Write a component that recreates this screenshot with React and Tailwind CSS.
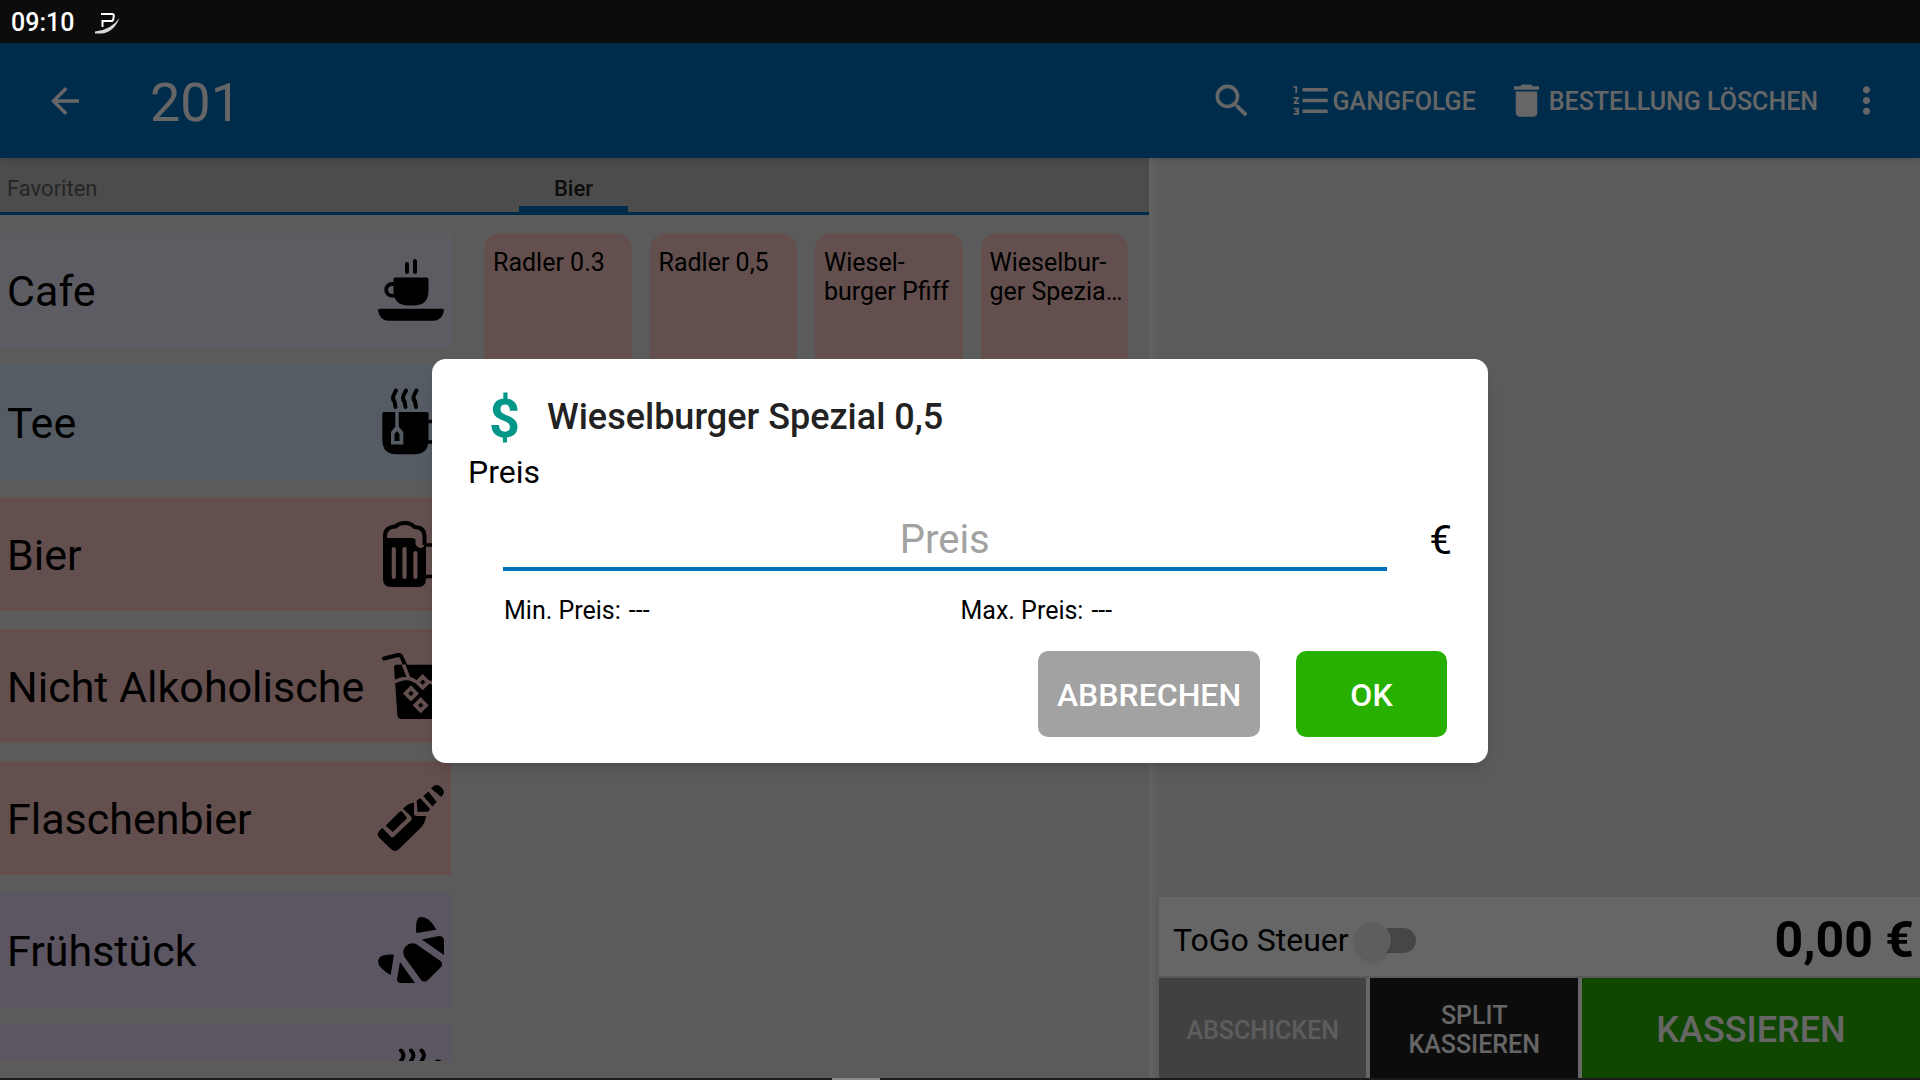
import { useState } from "react";
import {
  MdArrowBack,
  MdDelete,
  MdFormatListNumbered,
  MdMoreVert,
  MdSearch,
} from "react-icons/md";

const Icon = ({ children }) => (
  <svg viewBox="0 0 66 66" className="h-[66px] w-[66px] shrink-0 overflow-visible" aria-hidden="true">
    {children}
  </svg>
);

const CoffeeIcon = () => (
  <Icon>
    <path d="M29 7v8M37 4v11" fill="none" stroke="black" strokeWidth="4" strokeLinecap="round" />
    <path d="M17 20.5h31.500q2 0 2 2v11q0 15-15 15h-5q-15 0-15-15v-11q0-2 1.500-2z" />
    <path d="M17 27h-3a5.800 5.800 0 0 0 0 11.600h3" fill="none" stroke="black" strokeWidth="3.800" />
    <path d="M2 51.700h62q2 0 2 2-2 10-11 10H11q-9 0-11-10 0-2 2-2z" />
  </Icon>
);

const TeaIcon = ({ cut }) => (
  <Icon>
    <path
      d="M18 1.500l-1.500 3q-3 4.500 0 8l1 5.500M28 1.500l-1.500 3q-3 4.500 0 8l1 5.500M38.500 1.500l-1.500 3q-3 4.500 0 8l1 5.500"
      fill="none"
      stroke="black"
      strokeWidth="4"
      strokeLinecap="round"
    />
    <path d="M6 23h43q1.500 0 1.500 1.500V51q0 14.300-14.500 14.300H19Q4.300 65.300 4.300 51V24.500Q4.300 23 6 23z" />
    <path d="M50 32.500h8q4 0 4 4v11q0 5.500-6 5.500h-7" fill="none" stroke="black" strokeWidth="3.500" />
    <path d="M19 23v15" stroke={cut} strokeWidth="3.500" />
    <path d="M17 38h4l4.300 5v12.500H13V43z" fill={cut} />
    <path d="M19 42l2.500 3v7h-5v-7z" />
  </Icon>
);

const BeerIcon = ({ cut }) => (
  <Icon>
    <path d="M5 14h43v44q0 8-8 8H13q-8 0-8-8z" />
    <path
      d="M7 18v-4q1-8 10-8 2-4 10-4t10 4q9 0 9.500 9v9q-1 3-4 3-5-1-5-5v-3q0-1.500-1.500-1.500z"
      fill={cut}
    />
    <path
      d="M7 22v-7q0-9 10.500-9.500 3.500-3.500 9.500-3.500t9.500 4Q46 6 46.500 15v9"
      fill="none"
      stroke="black"
      strokeWidth="4"
    />
    <path d="M7 17h28.500v5H7z" />
    <path d="M15.800 28v28M26.500 28v28M37.400 32v24" stroke={cut} strokeWidth="4.200" strokeLinecap="round" />
    <path d="M48 24h9q5 0 5 5v21q0 5.500-6 5.500h-8" fill="none" stroke="black" strokeWidth="3.500" />
  </Icon>
);

const SodaIcon = ({ cut }) => (
  <Icon>
    <path d="M6 5.500l14-3.500q2.500-.5 3.500 2l4 9" fill="none" stroke="black" strokeWidth="4" strokeLinecap="round" strokeLinejoin="round" />
    <path d="M17.500 11.700H64l-3.500 50q-.5 4.300-4.500 4.300H24q-4.500 0-4.700-4.300L16 13z" />
    <path d="M25.500 11.700l5.500 14M15 29.500q8-4.500 15-4 5 .5 8 3.500M51 29q6 2 13 0" fill="none" stroke={cut} strokeWidth="3.500" />
    <g fill="black" stroke={cut} strokeWidth="3.800">
      <path d="M44.700 23.800l5.400 5.400-5.400 5.400-5.400-5.400z" />
      <path d="M33 35l5.400 5.400-5.400 5.400-5.400-5.400z" />
      <path d="M42.700 46.800l5.400 5.400-5.400 5.400-5.400-5.400z" />
    </g>
  </Icon>
);

const BottleIcon = () => (
  <Icon>
    <path d="M4.500 43l8.500 9 2 .5L33.500 35v-3L25 23.500l5-4q3-2 6-1.800V29l1.500 2H48q-.5 7-6 12.500L21 64q-4 4-8 0L2 53.500q-4-4-.5-8z" />
    <path d="M7.700 40.500L22 26.500q1-.7 2 0l4.500 5.500q.5 1-.3 2L14.700 47z" />
    <path d="M38.700 15.500l3.500-2.500L52 24l-1.500 2.500-11 .5z" />
    <path d="M45.300 11l5-4.500 8.400 10.500-4.200 4.500z" />
    <path d="M53 3.500q5-6 10-1.500 5.500 4.500.5 10z" />
  </Icon>
);

const CroissantIcon = () => (
  <Icon>
    <path d="M38.300 16Q37 0 43 0q9 0 15.300 12.700z" />
    <path d="M43.700 22.500L61 19q5 0 5 5v14z" />
    <path d="M26.500 40q-3-6 1-10.500 5-5 10.500-2.500L62.500 44q3 3 .5 6L50 63q-4 3-7 0z" />
    <path d="M22 45l15 21H23q-4 0-4-4z" />
    <path d="M16 37.700L12.700 58Q0 51 0 44q1-7.500 16-6.300z" />
  </Icon>
);

const SoupIcon = () => (
  <Icon>
    <path
      d="M23 1.500q4 4 1.500 8L20 17M33 1.500q4 4 1.500 8L30 17M43.500 1.500q4 4 1.500 8L40.500 17"
      fill="none"
      stroke="black"
      strokeWidth="4"
      strokeLinecap="round"
    />
    <circle cx="60" cy="15" r="4.500" />
    <path d="M3 26h60q0 36-30 36T3 26z" />
  </Icon>
);

const categories = [
  { name: "Cafe", bg: "bg-[#e6e6f5]", icon: <CoffeeIcon /> },
  { name: "Tee", bg: "bg-[#d5e6f7]", icon: <TeaIcon cut="#d5e6f7" /> },
  { name: "Bier", bg: "bg-[#f7c5c1]", icon: <BeerIcon cut="#f7c5c1" /> },
  { name: "Nicht Alkoholische", bg: "bg-[#f7c5c1]", icon: <SodaIcon cut="#f7c5c1" /> },
  { name: "Flaschenbier", bg: "bg-[#f7c5c1]", icon: <BottleIcon /> },
  { name: "Frühstück", bg: "bg-[#e6d5f5]", icon: <CroissantIcon /> },
  { name: "", bg: "bg-[#e6d5f5]", icon: <SoupIcon /> },
];

const products = ["Radler 0.3", "Radler 0,5", "Wiesel-\nburger Pfiff", "Wieselbur-\nger Spezia…"];

const StatusBar = () => (
  <div className="flex h-[43px] shrink-0 items-center gap-5 bg-[#0c0c0c] px-[11px] pt-[2px] text-white">
    <span className="text-[25px] font-medium">09:10</span>
    <svg viewBox="0 0 26 22" className="h-[22px] w-[26px]" aria-hidden="true">
      <path d="M7 2h11q2 0 1.800 2l-.5 3q-.3 2-2.300 2H8.500v6" fill="none" stroke="white" strokeWidth="2" />
      <path d="M1 19.500Q17 18 25.500 6 20 20 8 21.500H1z" fill="#d8d8d8" />
    </svg>
  </div>
);

const Header = () => (
  <header className="z-10 flex h-[115px] shrink-0 items-center bg-[#006fbc] pr-8 pl-11 text-white shadow-md">
    <button type="button" aria-label="Zurück">
      <MdArrowBack size={42} />
    </button>
    <h1 className="ml-16 pt-1 text-[54px] leading-none">201</h1>
    <div className="ml-auto flex items-center text-[25px] font-medium">
      <button type="button" aria-label="Suchen" className="mr-9">
        <MdSearch size={44} />
      </button>
      <button type="button" className="mr-[29px] flex items-center">
        <MdFormatListNumbered size={43} />
        <span className="pt-[2px]">GANGFOLGE</span>
      </button>
      <button type="button" className="mr-[27px] flex items-center gap-px">
        <MdDelete size={43} />
        <span className="pt-[2px]">BESTELLUNG LÖSCHEN</span>
      </button>
      <button type="button" aria-label="Mehr">
        <MdMoreVert size={43} />
      </button>
    </div>
  </header>
);

const Menu = () => (
  <section className="flex min-w-0 flex-[1149] flex-col">
    <nav className="grid h-[57px] shrink-0 grid-cols-[1fr_109px_1fr] border-b-3 border-[#006fbc] bg-[#bbbebb] pr-[2px] text-[22px]">
      <button type="button" className="px-[7px] pt-[6px] text-left text-[#606060]">
        Favoriten
      </button>
      <button type="button" className="border-b-6 border-[#006fbc] pt-3 font-medium text-[#222222]">
        Bier
      </button>
    </nav>
    <div className="flex min-h-0 flex-1 pt-[18px] pb-[17px]">
      <div className="flex w-[451px] shrink-0 flex-col gap-[18px] overflow-hidden">
        {categories.map((c, i) => (
          <button
            key={i}
            type="button"
            aria-label={c.name || "Suppen"}
            className={`flex h-[114px] shrink-0 items-center justify-between px-[7px] text-[43px] whitespace-nowrap ${c.bg}`}
          >
            <span className="pt-[2px]">{c.name}</span>
            {c.icon}
          </button>
        ))}
      </div>
      <div className="grid flex-1 auto-rows-[147px] grid-cols-4 gap-[18px] pr-[21px] pl-[33px]">
        {products.map((p) => (
          <button
            key={p}
            type="button"
            className="flex items-start rounded-2xl bg-[#f7c5c1] px-[9px] pt-[15px] text-left text-[25px] leading-[29px] whitespace-pre"
          >
            {p}
          </button>
        ))}
      </div>
    </div>
  </section>
);

const Order = () => (
  <section className="flex min-w-0 flex-[761] flex-col">
    <div className="flex-1" />
    <div className="flex h-[81px] items-center border-b-2 border-[#e0e0e0] bg-white pt-[7px] pr-[6px] pl-[14px]">
      <label htmlFor="togo" className="text-[32px]">
        ToGo Steuer
      </label>
      <input
        id="togo"
        type="checkbox"
        role="switch"
        className="relative ml-[19px] h-[25px] w-[48px] appearance-none rounded-full bg-[#b0b0b0] before:absolute before:-top-[6px] before:-left-[14px] before:h-[37px] before:w-[37px] before:rounded-full before:bg-[#ececec] before:shadow-md"
      />
      <span className="ml-auto text-[50px] leading-none font-bold">0,00 €</span>
    </div>
    <div className="grid h-[100px] grid-cols-[1fr_1fr_1.63fr] gap-1 bg-white text-[25px] leading-[29px] font-medium text-white">
      <button type="button" className="bg-[#a2a2a2] pt-1 text-[#e8e8e8]">
        ABSCHICKEN
      </button>
      <button type="button" className="bg-[#1e1e1e] px-6 pt-1">
        SPLIT KASSIEREN
      </button>
      <button type="button" className="bg-[#27b000] pt-1 text-[36px]">
        KASSIEREN
      </button>
    </div>
  </section>
);

const PriceDialog = () => {
  const [price, setPrice] = useState("");

  const handleSubmit = (e) => {
    e.preventDefault();
  };

  return (
    <div className="absolute inset-0 z-20 flex items-center justify-center bg-black/60">
      <form
        role="dialog"
        aria-labelledby="dialog-title"
        onSubmit={handleSubmit}
        className="w-[55%] rounded-[14px] bg-white px-9 pt-8 pb-[26px] shadow-lg"
      >
        <div className="flex h-[52px] items-center pl-[21px]">
          <span className="w-[58px] pt-1 text-[54px] leading-none font-bold text-[#009688]">$</span>
          <h2 id="dialog-title" className="text-[36px] leading-none font-medium text-[#222222]">
            Wieselburger Spezial 0,5
          </h2>
        </div>
        <label htmlFor="price" className="mt-[11px] block text-[32px] leading-9">
          Preis
        </label>
        <div className="mt-[21px] flex items-center text-[40px]">
          <input
            id="price"
            type="text"
            placeholder="Preis"
            value={price}
            onChange={(e) => setPrice(e.target.value)}
            className="ml-[35px] h-[60px] min-w-0 flex-1 border-b-4 border-[#0072bc] pt-[2px] text-center outline-none placeholder:text-[#a2a2a2]"
          />
          <span className="ml-[43px] leading-none">€</span>
        </div>
        <div className="mt-6 mr-[35px] ml-9 grid grid-cols-2 text-[25px] leading-8">
          <span className="flex gap-2">
            Min. Preis: <span>---</span>
          </span>
          <span className="flex gap-2">
            Max. Preis: <span>---</span>
          </span>
        </div>
        <div className="mt-6 flex justify-end gap-9 pr-[5px] text-[32px] font-medium text-white">
          <button type="button" className="h-[86px] w-[222px] rounded-[10px] bg-[#a2a2a2] pt-[2px]">
            ABBRECHEN
          </button>
          <button type="submit" className="h-[86px] w-[151px] rounded-[10px] bg-[#27b000] pt-[2px]">
            OK
          </button>
        </div>
      </form>
    </div>
  );
};

const App = () => {
  return (
    <div className="flex h-screen flex-col overflow-hidden bg-[#1c1c1e] font-['Roboto',sans-serif] text-black">
      <StatusBar />
      <div className="relative flex min-h-0 flex-1 flex-col bg-[#e4e4e4]">
        <Header />
        <main className="flex min-h-0 flex-1">
          <Menu />
          <div className="w-[10px] shrink-0 bg-linear-to-r from-[#f8f8f8] to-[#e2e2e2]" />
          <Order />
        </main>
        <PriceDialog />
      </div>
      <div className="flex h-[2px] shrink-0 justify-center pr-52">
        <div className="w-12 bg-[#8a8a8a]" />
      </div>
    </div>
  );
};

export default App;
